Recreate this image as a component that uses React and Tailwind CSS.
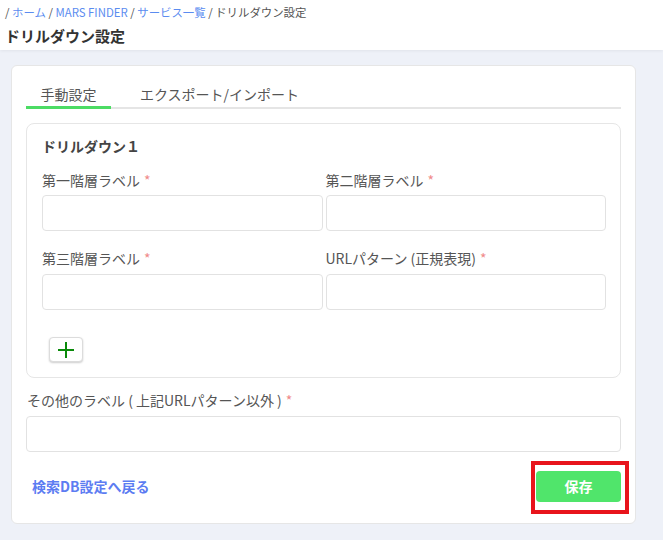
export default function App() {
  const font = { fontFamily: '"Noto Sans CJK JP", "Noto Sans", sans-serif' }

  const Label = ({ children }) => (
    <div className="text-[14px] leading-[20px] text-[#555]">
      {children}
      <span className="ml-1 text-[#f08a8a]">*</span>
    </div>
  )

  const Input = () => (
    <div className="h-[36px] rounded-[4px] border border-[#e2e2e2] bg-white" />
  )

  return (
    <div className="min-h-[540px] w-[663px] bg-[#eef1f8]" style={font}>
      <header className="h-[50px] bg-white px-[5px] pt-[3px] shadow-[0_1px_3px_rgba(0,0,0,0.06)]">
        <div className="text-[11.4px] leading-[18px] text-[#555]">
          / <span className="text-[#5b8cf0]">ホーム</span> /{" "}
          <span className="text-[#5b8cf0]">MARS FINDER</span> /{" "}
          <span className="text-[#5b8cf0]">サービス一覧</span> / ドリルダウン設定
        </div>
        <h1 className="mt-[4px] text-[15px] font-bold leading-[22px] text-[#333]">ドリルダウン設定</h1>
      </header>

      <main className="pl-[11px] pt-[15px] pb-[17px]">
        <div className="w-[625px] rounded-[6px] border border-[#e6e6e6] bg-white px-[14px] pt-[18px] pb-[21px]">
          <div className="flex border-b-2 border-[#e5e5e5]">
            <div className="-mb-[2px] w-[85px] border-b-[3px] border-[#4cdc64] pb-[2px] text-center text-[14px] leading-[20px] text-[#555]">
              手動設定
            </div>
            <div className="ml-[29px] text-[14px] leading-[20px] text-[#555]">エクスポート/インポート</div>
          </div>

          <div className="mt-[14px] rounded-[8px] border border-[#e6e6e6] pl-[15px] pr-[14px] pt-[12px] pb-[15px]">
            <div className="text-[14px] font-bold leading-[20px] text-[#444]">ドリルダウン１</div>
            <div className="mt-[14px] grid grid-cols-2 gap-x-[3px] gap-y-[17px]">
              <div>
                <Label>第一階層ラベル</Label>
                <div className="mt-[5px]"><Input /></div>
              </div>
              <div>
                <Label>第二階層ラベル</Label>
                <div className="mt-[5px]"><Input /></div>
              </div>
              <div>
                <Label>第三階層ラベル</Label>
                <div className="mt-[6px]"><Input /></div>
              </div>
              <div>
                <Label>URLパターン (正規表現)</Label>
                <div className="mt-[6px]"><Input /></div>
              </div>
            </div>
            <button className="ml-[7px] mt-[27px] flex h-[25px] w-[34px] items-center justify-center rounded-[4px] border border-[#dcdcdc] bg-white shadow-[0_1px_2px_rgba(0,0,0,0.2)]">
              <svg width="18" height="18" viewBox="0 0 18 18">
                <path d="M9 1v16M1 9h16" stroke="#0a8a0a" strokeWidth="2" />
              </svg>
            </button>
          </div>

          <div className="mt-[12px] pl-[1px]">
            <Label>その他のラベル ( 上記URLパターン以外 )</Label>
          </div>
          <div className="mt-[6px]"><Input /></div>

          <div className="mt-[19px] flex items-center justify-between">
            <a className="ml-[6px] text-[14px] font-bold text-[#5c7cf2]">検索DB設定へ戻る</a>
            <div className="relative">
              <div className="pointer-events-none absolute -left-[5px] -right-[8px] -top-[10px] -bottom-[12px] border-[4px] border-[#e8141c]" />
              <button className="relative flex h-[31px] w-[85px] items-center justify-center rounded-[4px] bg-[#50e56b] text-[14px] font-bold text-white">
                保存
              </button>
            </div>
          </div>
        </div>
      </main>
    </div>
  )
}
